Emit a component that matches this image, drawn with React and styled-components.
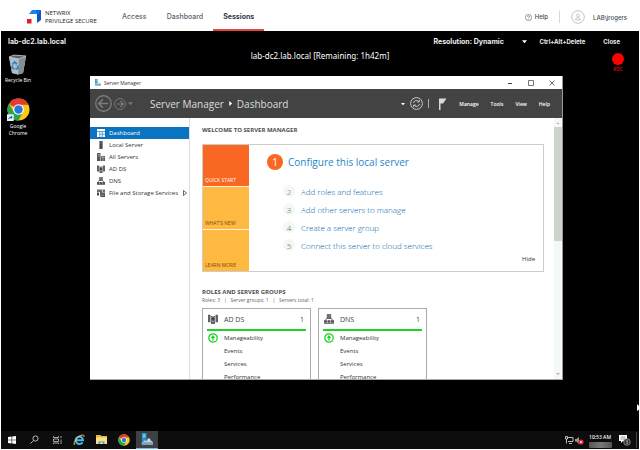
import React from "react";
import styled, { createGlobalStyle } from "styled-components";

const ui = '"Open Sans", "Noto Sans", sans-serif';
const web = 'Inter, "Liberation Sans", sans-serif';

const GlobalStyle = createGlobalStyle`
  *, *::before, *::after { box-sizing: border-box; }
  body { margin: 0; background: #fff; font-family: ${ui}; font-size: 7px; color: #222; }
  h1, h2, h3, p, ul, ol { margin: 0; padding: 0; font: inherit; }
  ul, ol { list-style: none; }
  button { margin: 0; padding: 0; border: 0; background: none; font: inherit; color: inherit; cursor: pointer; white-space: nowrap; }
  a { color: inherit; text-decoration: none; white-space: nowrap; }
  svg { display: block; flex: none; }
`;

const Page = styled.div`
  display: flex;
  flex-direction: column;
  height: 100vh;
  overflow: hidden;
`;

/* ---------- product header ---------- */
const Header = styled.header`
  display: flex;
  align-items: stretch;
  flex: none;
  height: 31px;
  padding: 0 13px 0 27px;
  font-family: ${web};
`;
const Brand = styled.a`
  display: flex;
  align-items: center;
  gap: 4px;
  padding-top: 3px;
  width: 85px;
  font-family: ${ui};
  font-size: 6px;
  font-weight: 500;
  line-height: 8px;
  color: #222;
`;
const Nav = styled.nav`
  display: flex;
`;
const NavLink = styled.a`
  padding: 3px 10px 0;
  line-height: 28px;
  font-size: 7px;
  font-weight: ${(p) => (p.$active ? 700 : 500)};
  color: ${(p) => (p.$active ? "#333a44" : "#5c636d")};
  border-bottom: 2px solid ${(p) => (p.$active ? "#e8453f" : "transparent")};
`;
const Account = styled.div`
  display: flex;
  align-items: center;
  margin-left: auto;
  padding-top: 3px;
  font-size: 6px;
  font-weight: 500;
  color: #444b55;
`;
const HelpButton = styled.button`
  display: flex;
  align-items: center;
  gap: 3px;
  padding-right: 11px;
  line-height: 12px;
  border-right: 1px solid #d5d8dc;
`;
const UserButton = styled.button`
  display: flex;
  align-items: center;
  gap: 8px;
  padding-left: 11px;
`;

/* ---------- remote session ---------- */
const Session = styled.main`
  display: flex;
  flex-direction: column;
  flex: 1;
  min-height: 0;
  margin: 0 1px 1px;
  background: #000;
  color: #fff;
`;
const SessionBar = styled.div`
  display: flex;
  align-items: center;
  flex: none;
  height: 20px;
  padding: 0 19px 0 7px;
  font-family: ${web};
  font-size: 7px;
  font-weight: 700;
  color: #eee;
`;
const Host = styled.h1`
  font-weight: 700;
  margin-right: auto;
`;
const ResolutionPicker = styled.label`
  display: grid;
  align-items: center;
  width: 94px;
  margin-right: 12px;
  > * { grid-area: 1 / 1; }
  svg { justify-self: end; pointer-events: none; }
`;
const Select = styled.select`
  appearance: none;
  margin: 0;
  padding: 0 8px 0 0;
  border: 0;
  background: transparent;
  font: inherit;
  color: inherit;
`;
const BarButton = styled.button`
  font-size: 6px;
  margin-right: ${(p) => (p.$last ? 0 : 18)}px;
`;
const Notice = styled.div`
  flex: none;
  height: 25px;
  display: grid;
  grid-template-columns: 1fr auto 1fr;
  align-items: start;
`;
const Remaining = styled.p`
  grid-column: 2;
  font-family: "Noto Sans", sans-serif;
  font-size: 8px;
  line-height: 10px;
  white-space: nowrap;
`;
const Record = styled.div`
  justify-self: end;
  display: flex;
  flex-direction: column;
  align-items: center;
  gap: 1px;
  width: 12px;
  margin: 2px 15px 0 0;
  font-size: 5px;
  font-weight: 700;
  line-height: 7px;
  color: #d40000;
`;
const RecordDot = styled.span`
  width: 12px;
  height: 12px;
  border-radius: 50%;
  background: #f00;
`;
const Desktop = styled.div`
  display: flex;
  align-items: stretch;
  flex: 1;
  min-height: 0;
  padding: 0 76px 51px 0;
`;
const Shortcuts = styled.div`
  flex: none;
  display: flex;
  flex-direction: column;
  gap: 14px;
  width: 89px;
  margin-top: -22px;
`;
const Shortcut = styled.button`
  display: flex;
  flex-direction: column;
  align-items: center;
  gap: 2px;
  width: 34px;
  font-size: 5px;
  line-height: 7px;
  color: #fff;
  white-space: normal;
`;
const Pointer = styled.svg`
  position: absolute;
  right: 0;
  top: 404px;
`;

/* ---------- Server Manager window ---------- */
const Window = styled.section`
  display: flex;
  flex-direction: column;
  flex: 1;
  min-width: 0;
  background: #fff;
  color: #333;
  border-right: 1px solid #999;
  border-bottom: 1px solid #aaa;
`;
const TitleBar = styled.div`
  display: flex;
  align-items: center;
  flex: none;
  gap: 3px;
  height: 13px;
  padding: 0 7px 0 4px;
  font-size: 5px;
`;
const WindowControls = styled.div`
  display: flex;
  gap: 15px;
  margin-left: auto;
`;
const Toolbar = styled.div`
  display: flex;
  align-items: center;
  flex: none;
  height: 29px;
  padding: 0 12px 0 5px;
  background: #434343;
  color: #eee;
`;
const HistoryButtons = styled.div`
  display: flex;
  align-items: center;
  gap: 2px;
  width: 55px;
`;
const Crumbs = styled.h2`
  display: flex;
  align-items: center;
  gap: 4px;
  margin-right: auto;
  font-size: 10px;
  color: #ddd;
  white-space: nowrap;
`;
const Tools = styled.div`
  display: flex;
  align-items: center;
  gap: 5px;
  margin-right: 12px;
`;
const Divider = styled.span`
  width: 1px;
  height: 9px;
  margin-right: 4px;
  background: #aaa;
`;
const MenuBar = styled.nav`
  display: flex;
  gap: 12px;
  font-size: 5px;
  font-weight: 600;
  color: #fff;
`;
const WindowBody = styled.div`
  display: flex;
  flex: 1;
  min-height: 0;
`;
const Sidebar = styled.nav`
  flex: none;
  width: 100px;
  padding-top: 9px;
  border-right: 1px solid #ddd;
`;
const SideItem = styled.a`
  display: flex;
  align-items: center;
  gap: 4px;
  height: 12px;
  padding: 0 2px 0 7px;
  font-size: 6px;
  color: ${(p) => (p.$active ? "#fff" : "#333")};
  background: ${(p) => (p.$active ? "#0a74c0" : "transparent")};
  svg:last-child:not(:first-child) { margin-left: auto; }
`;
const Content = styled.div`
  flex: 1;
  min-width: 0;
  overflow: hidden;
  padding: 8px 10px 0 12px;
`;
const Heading = styled.h3`
  font-size: 6px;
  font-weight: 700;
  line-height: 9px;
  color: #4b4f4b;
`;
const Welcome = styled.div`
  display: flex;
  margin: 9px 0 16px;
  border: 1px solid #ccc;
  height: 128px;
`;
const Tiles = styled.div`
  display: flex;
  flex-direction: column;
  gap: 1px;
  width: 46px;
  background: #fff3df;
`;
const Tile = styled.button`
  display: flex;
  align-items: flex-end;
  flex: 1;
  padding: 0 2px 1px;
  font-size: 5px;
  line-height: 9px;
  color: ${(p) => (p.$active ? "#fff" : "#7d4b08")};
  background: ${(p) => (p.$active ? "#fa6722" : "#ffb840")};
`;
const Steps = styled.ol`
  flex: 1;
  padding: 9px 0 0 18px;
`;
const Step = styled.li`
  display: flex;
  align-items: center;
  gap: ${(p) => (p.$main ? 5 : 6)}px;
  height: ${(p) => (p.$main ? 16 : 18)}px;
  margin: ${(p) => (p.$main ? "0 0 12px" : "0 0 0 16px")};
  font-size: ${(p) => (p.$main ? 10 : 8)}px;
  font-weight: ${(p) => (p.$main ? 400 : 300)};
  color: ${(p) => (p.$main ? "#1f86c4" : "#005fa8")};
`;
const StepNumber = styled.span`
  display: grid;
  place-items: center;
  width: ${(p) => (p.$main ? 16 : 12)}px;
  height: ${(p) => (p.$main ? 16 : 12)}px;
  border-radius: 50%;
  color: ${(p) => (p.$main ? "#fff" : "#4f6453")};
  background: ${(p) => (p.$main ? "#fa6722" : "#f3f8f3")};
`;
const HideButton = styled.button`
  align-self: flex-end;
  margin: 0 8px 8px 0;
  font-size: 6px;
  line-height: 8px;
`;
const Summary = styled.p`
  font-size: 5px;
  line-height: 7px;
  color: #666;
  white-space: pre;
`;
const Cards = styled.div`
  display: flex;
  gap: 7px;
  margin-top: 4px;
`;
const Card = styled.article`
  flex: none;
  width: 109px;
  padding: 0 4px;
  border: 1px solid #aaa;
`;
const CardHead = styled.div`
  display: flex;
  align-items: center;
  gap: 6px;
  height: 22px;
  padding: 0 2px 0 1px;
  font-size: 7px;
  color: #444;
  border-bottom: 2px solid #1fd321;
  span { margin-left: auto; }
`;
const CardItem = styled.a`
  display: flex;
  align-items: center;
  height: 13px;
  font-size: 6px;
  line-height: 8px;
  color: #333;
  &::before { content: ""; width: ${(p) => (p.$icon ? 0 : 17)}px; }
  svg { margin: 0 6px 0 1px; }
`;
const ScrollTrack = styled.div`
  flex: none;
  display: flex;
  flex-direction: column;
  align-items: center;
  gap: 2px;
  width: 8px;
  padding: 3px 0;
  background: #f4f9f5;
  svg:last-child { margin-top: auto; }
`;
const ScrollThumb = styled.div`
  width: 8px;
  height: 114px;
  background: #cdd4cd;
`;

/* ---------- taskbar ---------- */
const Taskbar = styled.footer`
  display: flex;
  align-items: center;
  flex: none;
  height: 18px;
  background: #0d0d0e;
`;
const PinnedApps = styled.div`
  display: grid;
  grid-template-columns: repeat(7, 1fr);
  width: 157px;
`;
const TaskButton = styled.button`
  display: grid;
  place-items: center;
  height: 18px;
  border-bottom: 1px solid ${(p) => (p.$active ? "#72b9ea" : "transparent")};
  background: ${(p) => (p.$active ? "#3d4144" : "transparent")};
`;
const Tray = styled.div`
  display: flex;
  align-items: center;
  gap: 3px;
  margin-left: auto;
  padding-right: 2px;
`;
const Clock = styled.div`
  display: flex;
  flex-direction: column;
  align-items: center;
  gap: 1px;
  width: 24px;
  margin: 0 4px 0 0;
  font-family: "Noto Sans", sans-serif;
  font-size: 5px;
  font-weight: 500;
  line-height: 8px;
  white-space: nowrap;
  color: #fff;
`;
const HiddenDate = styled.span`
  width: 23px;
  height: 6px;
  border-radius: 1px;
  background: linear-gradient(90deg, #555, #777 50%, #555);
`;
const TrayIcons = styled.div`
  display: flex;
  align-items: center;
  gap: 1px;
  margin-right: 1px;
`;
const TrayEdge = styled.span`
  width: 1px;
  height: 16px;
  margin-left: 2px;
  background: #444;
`;

/* ---------- drawings ---------- */
const Logo = () => (
  <svg width="14" height="14" viewBox="0 0 14 14" aria-hidden="true">
    <path d="M5 0h9l-4 4H2z" fill="#1e7ff0" />
    <path d="M14 0v10l-4 3V4z" fill="#0757c9" />
    <path d="M10 4l4-4H9z" fill="#0c66db" />
    <path d="M0 9h4.500v4.500H0z" fill="#e01b2c" />
  </svg>
);
const Chrome = ({ size, shortcut }) => (
  <svg width={size} height={size} viewBox="0 0 24 24" aria-hidden="true">
    <circle cx="12" cy="12" r="11.500" fill="#f9c915" />
    <path d="M12 12L2.040 6.250A11.500 11.500 0 0 1 21.960 6.250L22 7H12z" fill="#e33b2e" />
    <path d="M2.040 6.250A11.500 11.500 0 0 0 12 23.500L16.500 14.500 12 12 7 14z" fill="#2ba24c" />
    <circle cx="12" cy="12" r="5.600" fill="#fff" />
    <circle cx="12" cy="12" r="4.400" fill="#2a75e0" />
    {shortcut && <path d="M0 17h7v7H0z" fill="#eef4f8" />}
    {shortcut && <path d="M1.500 22.500c0-2 1-3 2.500-3v-1.500l2 2-2 2V21c-1 0-2 .5-2.500 1.500z" fill="#1767ad" />}
  </svg>
);
const RecycleBin = () => (
  <svg width="20" height="21" viewBox="0 0 20 21" aria-hidden="true">
    <path d="M1 3l5-2 12 1-3 17-5 1.500-6-1.500z" fill="#9da3a5" />
    <path d="M1 3l10 2 7-3-3 17-5 1.500-6-1.500z" fill="#b6babb" />
    <path d="M11 5l7-3-3 17-5 1.500z" fill="#858c8e" />
    <path d="M1 3l5-2 12 1-7 3z" fill="#5e6566" stroke="#ccd0d0" strokeWidth=".7" />
    <path d="M4.500 10.500l2-2.500 2.500 2M9.500 11.500l.5 3-2.500.5M6.500 15l-2.500-1 .5-2.500" fill="none" stroke="#158be0" strokeWidth="1.700" />
  </svg>
);
const ServerMark = ({ size }) => (
  <svg width={size} height={size} viewBox="0 0 14 14" aria-hidden="true">
    <path d="M2 0h5v9H2z" fill="#2295cf" />
    <path d="M3 2h3M3 4h3" stroke="#bde3f7" />
    <path d="M2 10l3-2h7l2 2v3H2z" fill="#b5ccda" />
    <path d="M2 10h12v3H2z" fill="#7ca3b9" />
    <path d="M8 6h3v3H8z" fill="#d7e5ed" />
  </svg>
);
const Caret = ({ color = "#ddd", up, right, size = 5 }) => (
  <svg width={size} height={size} viewBox="0 0 6 6" aria-hidden="true">
    <path d={up ? "M1 4.500L3 2l2 2.500z" : right ? "M1.500 0L5 3 1.500 6z" : "M0 1.500h6L3 5z"} fill={color} />
  </svg>
);
const RoundArrow = ({ size, right }) => (
  <svg width={size} height={size} viewBox="0 0 16 16" fill="none" stroke="#7c7c7c" aria-hidden="true">
    <circle cx="8" cy="8" r="7.300" strokeWidth="1.200" />
    <path d={right ? "M3.500 8h9M8.500 4l4 4-4 4" : "M12.500 8h-9M7.500 4l-4 4 4 4"} strokeWidth="1.500" />
  </svg>
);
const Refresh = () => (
  <svg width="13" height="13" viewBox="0 0 13 13" fill="none" stroke="#c9c9c9" aria-hidden="true">
    <circle cx="6.500" cy="6.500" r="5.900" />
    <path d="M3.500 6a3 3 0 0 1 5.200-1.500M9.500 7a3 3 0 0 1-5.200 1.500M9.300 3v2H7.200M3.700 10V8h2.100" />
  </svg>
);
const Flag = () => (
  <svg width="9" height="12" viewBox="0 0 9 12" aria-hidden="true">
    <path d="M1 .5h7.500L5 5.500H2.500V12H1z" fill="#d5ddd5" />
  </svg>
);

const glyphs = {
  dashboard: (
    <>
      <path d="M0 0h8v8H0z" fill="#fff" />
      <path d="M0 2.500h8M2.700 2.500V8M5.300 2.500V8M2.700 5.200H8" stroke="#3e91cb" strokeWidth=".8" />
    </>
  ),
  server: <path d="M2.500 0h3v8h-3zM3 1.200h2M3 2.500h2" fill="#4a4a4a" stroke="#777" strokeWidth=".4" />,
  servers: (
    <>
      <path d="M0 0h3.500v8H0zM4 3h1.800v5H4zM6.200 3H8v5H6.200z" fill="#585858" />
      <path d="M.6 1.500h2.300M.6 3h2.300M4 4.500h4" stroke="#ccc" strokeWidth=".5" />
    </>
  ),
  adds: (
    <>
      <path d="M0 .5h2v6H0zM6 .5h2v6H6zM2.400 1.500h3.200V8H2.400z" fill="#626262" />
      <path d="M4 1.500L6 4 4 6.500 2 4z" fill="#444" stroke="#eee" strokeWidth=".4" />
    </>
  ),
  dns: (
    <>
      <path d="M2.600 .2h2.800v3H2.600z" fill="#777" stroke="#505050" strokeWidth=".6" />
      <path d="M1.200 5l.8-1.500h4L6.800 5" fill="none" stroke="#505050" strokeWidth=".7" />
      <path d="M0 5h2.400v2H0zM2.800 5h2.400v2H2.800zM5.600 5H8v2H5.600zM0 7.300h8V8H0z" fill="#505050" />
    </>
  ),
  storage: (
    <>
      <path d="M0 .5h5v6H3V3H0zM5.500 .5H8V3H5.500z" fill="#707070" />
      <path d="M3.500 3.500H8V8H3.500zM0 3.500h2v3H0z" fill="#4a4a4a" />
      <path d="M4 5h3.500M4 6.500h3.500" stroke="#bbb" strokeWidth=".5" />
    </>
  ),
};
const Glyph = ({ name, size = 8 }) => (
  <svg width={size} height={size} viewBox="0 0 8 8" aria-hidden="true">{glyphs[name]}</svg>
);

const sideItems = [
  ["dashboard", "Dashboard"],
  ["server", "Local Server"],
  ["servers", "All Servers"],
  ["adds", "AD DS"],
  ["dns", "DNS"],
  ["storage", "File and Storage Services"],
];
const steps = [
  "Configure this local server",
  "Add roles and features",
  "Add other servers to manage",
  "Create a server group",
  "Connect this server to cloud services",
];

const RoleCard = ({ icon, name }) => (
  <Card>
    <CardHead>
      <Glyph name={icon} size={10} />
      {name}
      <span>1</span>
    </CardHead>
    <CardItem href="#" $icon>
      <svg width="10" height="10" viewBox="0 0 10 10" aria-hidden="true">
        <circle cx="5" cy="5" r="4.200" fill="none" stroke="#1fd321" strokeWidth="1.300" />
        <path d="M5 2L7.300 5H5.700v2.500H4.300V5H2.700z" fill="#1fd321" />
      </svg>
      Manageability
    </CardItem>
    <CardItem href="#">Events</CardItem>
    <CardItem href="#">Services</CardItem>
    <CardItem href="#">Performance</CardItem>
  </Card>
);

const ServerManager = () => (
  <Window aria-label="Server Manager">
    <TitleBar>
      <ServerMark size={7} />
      Server Manager
      <WindowControls>
        <button aria-label="Minimize">
          <svg width="6" height="6" viewBox="0 0 6 6"><path d="M1 3.500h4" stroke="#444" /></svg>
        </button>
        <button aria-label="Maximize">
          <svg width="6" height="6" viewBox="0 0 6 6"><path d="M.5.5h5v5h-5z" fill="none" stroke="#555" strokeWidth=".8" /></svg>
        </button>
        <button aria-label="Close window">
          <svg width="6" height="6" viewBox="0 0 6 6"><path d="M.5.5l5 5M5.500.5l-5 5" stroke="#444" strokeWidth=".8" /></svg>
        </button>
      </WindowControls>
    </TitleBar>
    <Toolbar>
      <HistoryButtons>
        <button aria-label="Back"><RoundArrow size={17} /></button>
        <button aria-label="Forward"><RoundArrow size={12} right /></button>
        <button aria-label="History"><Caret color="#777" /></button>
      </HistoryButtons>
      <Crumbs>
        Server Manager <Caret right color="#fff" /> Dashboard
      </Crumbs>
      <Tools>
        <button aria-label="Refresh options"><Caret size={4} color="#fff" /></button>
        <button aria-label="Refresh"><Refresh /></button>
        <Divider />
        <button aria-label="Notifications"><Flag /></button>
      </Tools>
      <MenuBar>
        <button>Manage</button>
        <button>Tools</button>
        <button>View</button>
        <button>Help</button>
      </MenuBar>
    </Toolbar>
    <WindowBody>
      <Sidebar aria-label="Servers">
        {sideItems.map(([icon, label], i) => (
          <SideItem key={label} href="#" $active={i === 0}>
            <Glyph name={icon} />
            {label}
            {icon === "storage" && (
              <svg width="4" height="6" viewBox="0 0 4 6" aria-hidden="true">
                <path d="M.5.5v5L3.500 3z" fill="none" stroke="#444" strokeWidth=".8" />
              </svg>
            )}
          </SideItem>
        ))}
      </Sidebar>
      <Content>
        <Heading>WELCOME TO SERVER MANAGER</Heading>
        <Welcome>
          <Tiles>
            <Tile $active>QUICK START</Tile>
            <Tile>WHAT'S NEW</Tile>
            <Tile>LEARN MORE</Tile>
          </Tiles>
          <Steps>
            {steps.map((text, i) => (
              <Step key={text} $main={i === 0}>
                <StepNumber $main={i === 0}>{i + 1}</StepNumber>
                <a href="#">{text}</a>
              </Step>
            ))}
          </Steps>
          <HideButton>Hide</HideButton>
        </Welcome>
        <Heading>ROLES AND SERVER GROUPS</Heading>
        <Summary>{"Roles: 3   |   Server groups: 1   |   Servers total: 1"}</Summary>
        <Cards>
          <RoleCard icon="adds" name="AD DS" />
          <RoleCard icon="dns" name="DNS" />
        </Cards>
      </Content>
      <ScrollTrack>
        <Caret up size={4} color="#aab3aa" />
        <ScrollThumb />
        <Caret size={4} color="#b5bdb5" />
      </ScrollTrack>
    </WindowBody>
  </Window>
);

const WindowsTaskbar = () => (
  <Taskbar>
    <PinnedApps>
      <TaskButton aria-label="Start">
        <svg width="8" height="8" viewBox="0 0 8 8">
          <path d="M0 1l3.600-.5v3.200H0zM4.200.4L8 0v3.700H4.200zM0 4.300h3.600v3.200L0 7zM4.200 4.300H8V8l-3.800-.5z" fill="#fff" />
        </svg>
      </TaskButton>
      <TaskButton aria-label="Search">
        <svg width="9" height="9" viewBox="0 0 9 9" fill="none" stroke="#ccc" strokeWidth=".9">
          <circle cx="5.500" cy="3.500" r="2.600" />
          <path d="M3.500 5.500L.5 8.500" />
        </svg>
      </TaskButton>
      <TaskButton aria-label="Task view">
        <svg width="9" height="8" viewBox="0 0 9 8" fill="none" stroke="#ccc" strokeWidth=".8">
          <path d="M.5 0v1.500h5V0M.5 3h5v2.500h-5zM.5 8V7h5v1M8 0v2M8 3.500V8" />
        </svg>
      </TaskButton>
      <TaskButton aria-label="Internet Explorer">
        <svg width="12" height="12" viewBox="0 0 12 12" fill="none">
          <path d="M9.500 8.200A3.700 3.700 0 1 1 10 6.300H3.500" stroke="#45b9ee" strokeWidth="2" />
          <path d="M1.500 11C-.5 9 5 1.500 9.500 1c1.800 0 1.800 1 1.200 2.200" stroke="#f2c940" strokeWidth="1" />
        </svg>
      </TaskButton>
      <TaskButton aria-label="File Explorer">
        <svg width="11" height="9" viewBox="0 0 11 9">
          <path d="M0 0h4.500l1 1H11v8H0z" fill="#e9b83d" />
          <path d="M0 2.500h11V9H0z" fill="#fbe08c" />
          <path d="M2.500 9V6.500h6V9H7V7.500H4V9z" fill="#3ba0dc" />
        </svg>
      </TaskButton>
      <TaskButton aria-label="Google Chrome"><Chrome size={12} /></TaskButton>
      <TaskButton aria-label="Server Manager" $active><ServerMark size={13} /></TaskButton>
    </PinnedApps>
    <Tray>
      <TrayIcons>
        <svg width="9" height="8" viewBox="0 0 9 8" fill="none" stroke="#ccc" role="img" aria-label="Network">
          <path d="M2.500 1.500H8v4H3M.5.500h2v2.500h-2zM1.500 3v4.500M4 7.500h3" strokeWidth=".9" />
        </svg>
        <svg width="9" height="9" viewBox="0 0 9 9" role="img" aria-label="Muted">
          <path d="M0 3h1.500L4 1v7L1.500 5.500H0z" fill="#999" />
          <circle cx="6" cy="6" r="2.600" fill="#e02c35" />
          <path d="M5 5l2 2M7 5L5 7" stroke="#fff" strokeWidth=".7" />
        </svg>
      </TrayIcons>
      <Clock>
        10:53 AM
        <HiddenDate />
      </Clock>
      <button aria-label="Notifications, 1 new">
        <svg width="12" height="12" viewBox="0 0 12 12">
          <path d="M0 1h8v6H4L2 9V7H0z" fill="#fff" />
          <path d="M1.500 3h5M1.500 5h5" stroke="#666" strokeWidth=".7" />
          <circle cx="8" cy="8" r="3.300" fill="#333" stroke="#aaa" strokeWidth=".7" />
          <path d="M7.300 7L8.200 6.400V10" fill="none" stroke="#ddd" strokeWidth=".7" />
        </svg>
      </button>
      <TrayEdge />
    </Tray>
  </Taskbar>
);

export default function App() {
  return (
    <Page>
      <GlobalStyle />
      <Header>
        <Brand href="#">
          <Logo />
          <span>NETWRIX<br />PRIVILEGE SECURE</span>
        </Brand>
        <Nav>
          <NavLink href="#">Access</NavLink>
          <NavLink href="#">Dashboard</NavLink>
          <NavLink href="#" $active>Sessions</NavLink>
        </Nav>
        <Account>
          <HelpButton>
            <svg width="7" height="7" viewBox="0 0 14 14" fill="none" stroke="#666" strokeWidth="1.300" aria-hidden="true">
              <circle cx="7" cy="7" r="6.200" />
              <path d="M5 5.300C5 3 9 3 9 5.300 9 7 7 6.700 7 8.500M7 9.800v1.200" />
            </svg>
            Help
          </HelpButton>
          <UserButton>
            <svg width="14" height="14" viewBox="0 0 14 14" fill="none" stroke="#b5bac2" aria-hidden="true">
              <circle cx="7" cy="7" r="6.300" strokeWidth=".9" />
              <circle cx="7" cy="5.500" r="1.500" strokeWidth=".8" />
              <path d="M4.500 10c0-3 5-3 5 0z" strokeWidth=".8" />
            </svg>
            LAB\jrogers
          </UserButton>
        </Account>
      </Header>
      <Session>
        <SessionBar>
          <Host>lab-dc2.lab.local</Host>
          <ResolutionPicker>
            <Select aria-label="Resolution" defaultValue="dynamic">
              <option value="dynamic">Resolution: Dynamic</option>
            </Select>
            <Caret color="#fff" />
          </ResolutionPicker>
          <BarButton>Ctrl+Alt+Delete</BarButton>
          <BarButton $last>Close</BarButton>
        </SessionBar>
        <Notice>
          <Remaining>lab-dc2.lab.local [Remaining: 1h42m]</Remaining>
          <Record>
            <RecordDot />
            REC
          </Record>
        </Notice>
        <Desktop>
          <Shortcuts>
            <Shortcut><RecycleBin />Recycle Bin</Shortcut>
            <Shortcut><Chrome size={23} shortcut />Google Chrome</Shortcut>
          </Shortcuts>
          <ServerManager />
        </Desktop>
        <WindowsTaskbar />
      </Session>
      <Pointer width="3" height="7" viewBox="0 0 3 7" aria-hidden="true">
        <path d="M0 0l3 3v2L0 7z" fill="#fff" />
      </Pointer>
    </Page>
  );
}
